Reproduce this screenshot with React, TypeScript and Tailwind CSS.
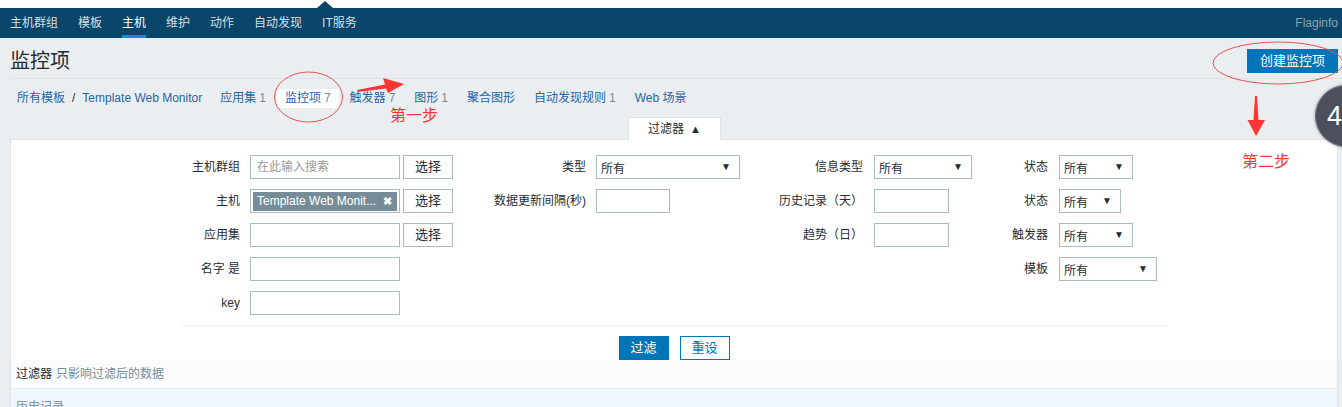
const font = "font-[family-name:'Liberation_Sans','Noto_Sans_CJK_SC',sans-serif]";

const navItems = ["主机群组", "模板", "主机", "维护", "动作", "自动发现", "IT服务"];

const tabs = [
  { label: "应用集", count: "1" },
  { label: "监控项", count: "7", active: true },
  { label: "触发器", count: "7" },
  { label: "图形", count: "1" },
  { label: "聚合图形", count: "" },
  { label: "自动发现规则", count: "1" },
  { label: "Web 场景", count: "" },
];

function Input({ w, placeholder }: { w: string; placeholder?: string }) {
  return (
    <div className={`${w} h-[24px] border border-[#acbbc2] bg-white flex items-center pl-[6px] text-[12px] text-[#999]`}>
      {placeholder}
    </div>
  );
}

function Select({ w }: { w: string }) {
  return (
    <div className={`${w} h-[24px] border border-[#acbbc2] bg-white flex items-center justify-between pl-[4px] pr-[8px] text-[12px] text-[#1f2c33]`}>
      <span className="pt-[3px]">所有</span>
      <span className="text-[10px] pb-[2px]">▼</span>
    </div>
  );
}

function PickBtn() {
  return (
    <div className="ml-[3px] w-[50px] h-[24px] border border-[#acbbc2] bg-white flex items-center justify-center text-[13px] text-[#1f2c33]">
      选择
    </div>
  );
}

function Label({ w, text }: { w: string; text: string }) {
  return <div className={`${w} shrink-0 text-right text-[12px] text-[#1f2c33]`}>{text}</div>;
}

export default function App() {
  return (
    <div className={`${font} relative w-[1342px] h-[407px] overflow-hidden bg-[#ebeef0]`}>
      {/* top strip */}
      <div className="h-[8px] bg-white relative">
        <svg className="absolute left-[317px] top-0" width="16" height="8" viewBox="0 0 16 8">
          <polygon points="0,8 8,1 16,8" fill="#0a466a" />
        </svg>
      </div>
      <div className="h-[30px] bg-[#0a466a] flex items-stretch justify-between">
        <div className="flex">
          {navItems.map((n) => (
            <div
              key={n}
              className={`relative px-[10px] flex items-center text-[12px] ${n === "主机" ? "text-white" : "text-[#d5dee3]"}`}
            >
              {n}
              {n === "主机" && <div className="absolute left-[10px] right-[10px] bottom-0 h-[3px] bg-[#1a8bd2]" />}
            </div>
          ))}
        </div>
        <div className="flex items-center pr-[4px] text-[12px] text-[#8ea3b1]">Flaginfo</div>
      </div>

      {/* header */}
      <div className="ml-[10px] h-[41px] pt-[6px] border-b border-[#dde3e7] flex items-center justify-between">
        <h1 className="text-[20px] leading-none text-[#1f2c33]">监控项</h1>
        <div className="mr-[4px] w-[91px] h-[24px] bg-[#0275b8] text-white text-[13px] flex items-center justify-center">
          创建监控项
        </div>
      </div>

      {/* breadcrumbs */}
      <div className="h-[38px] pl-[17px] flex items-center text-[12px] text-[#1f65a6]">
        <span>所有模板</span>
        <span className="mx-[7px] text-[#1f2c33]">/</span>
        <span>Template Web Monitor</span>
        <div className="ml-[8px] flex items-center">
          {tabs.map((t) =>
            t.active ? (
              <div key={t.label} className="pl-[2px] pr-[1px] flex items-center">
                <div className="px-[8px] h-[19px] bg-white flex items-center">
                  {t.label}
                  <span className="ml-[3px] text-[#768d99]">{t.count}</span>
                </div>
              </div>
            ) : (
              <div key={t.label} className="pl-[10px] pr-[9px] flex items-center">
                {t.label}
                {t.count && <span className="ml-[3px] text-[#768d99]">{t.count}</span>}
              </div>
            )
          )}
        </div>
      </div>

      {/* filter */}
      <div className="ml-[10px] mr-[4px]">
        <div className="relative z-10 -mb-px ml-[618px] w-[93px] h-[23px] bg-white border border-b-0 border-[#dde3e7] flex items-center justify-center text-[12px] text-[#1f2c33]">
          过滤器 <span className="ml-[6px] text-[11px]">▲</span>
        </div>
        <div className="bg-white border border-[#dde3e7]">
          <div className="pt-[10px]">
            {/* row 1 */}
            <div className="h-[34px] flex items-center">
              <Label w="w-[239px] pr-[10px]" text="主机群组" />
              <div className="w-[220px] flex items-center">
                <Input w="w-[150px]" placeholder="在此输入搜索" />
                <PickBtn />
              </div>
              <Label w="w-[126px] pr-[10px]" text="类型" />
              <div className="w-[154px]"><Select w="w-[144px]" /></div>
              <Label w="w-[124px] pr-[11px]" text="信息类型" />
              <div className="w-[116px]"><Select w="w-[98px]" /></div>
              <Label w="w-[69px] pr-[11px]" text="状态" />
              <Select w="w-[74px]" />
            </div>
            {/* row 2 */}
            <div className="h-[34px] flex items-center">
              <Label w="w-[239px] pr-[10px]" text="主机" />
              <div className="w-[220px] flex items-center">
                <div className="w-[150px] h-[24px] border border-[#acbbc2] bg-white flex items-center px-[2px]">
                  <div className="w-full h-[19px] bg-[#768d99] flex items-center justify-between pl-[4px] pr-[5px] text-[12px] text-white">
                    <span>Template Web Monit...</span>
                    <span className="text-[11px] font-bold">✖</span>
                  </div>
                </div>
                <PickBtn />
              </div>
              <Label w="w-[126px] pr-[10px]" text="数据更新间隔(秒)" />
              <div className="w-[154px]"><Input w="w-[74px]" /></div>
              <Label w="w-[124px] pr-[11px]" text="历史记录（天）" />
              <div className="w-[116px]"><Input w="w-[75px]" /></div>
              <Label w="w-[69px] pr-[11px]" text="状态" />
              <Select w="w-[62px]" />
            </div>
            {/* row 3 */}
            <div className="h-[34px] flex items-center">
              <Label w="w-[239px] pr-[10px]" text="应用集" />
              <div className="w-[220px] flex items-center">
                <Input w="w-[150px]" />
                <PickBtn />
              </div>
              <div className="w-[280px]" />
              <Label w="w-[124px] pr-[11px]" text="趋势（日）" />
              <div className="w-[116px]"><Input w="w-[75px]" /></div>
              <Label w="w-[69px] pr-[11px]" text="触发器" />
              <Select w="w-[74px]" />
            </div>
            {/* row 4 */}
            <div className="h-[34px] flex items-center">
              <Label w="w-[239px] pr-[10px]" text="名字 是" />
              <div className="w-[220px]"><Input w="w-[150px]" /></div>
              <div className="w-[520px]" />
              <Label w="w-[69px] pr-[11px]" text="模板" />
              <Select w="w-[98px]" />
            </div>
            {/* row 5 */}
            <div className="h-[34px] flex items-center">
              <Label w="w-[239px] pr-[10px]" text="key" />
              <Input w="w-[150px]" />
            </div>
          </div>
          <div className="mt-[5px] ml-[171px] w-[986px] border-t border-[#ebeef0]" />
          <div className="mt-[10px] flex justify-center gap-[11px]">
            <div className="w-[50px] h-[24px] bg-[#0275b8] text-white text-[13px] flex items-center justify-center">过滤</div>
            <div className="w-[50px] h-[24px] border border-[#0275b8] bg-white text-[#0275b8] text-[13px] flex items-center justify-center">重设</div>
          </div>
          <div className="h-[28px] bg-[#fbfcfd] flex items-center pl-[5px] text-[12px]">
            <span className="text-[#1f2c33]">过滤器</span>
            <span className="ml-[4px] text-[#768d99]">只影响过滤后的数据</span>
          </div>
          <div className="h-[30px] border-t border-[#e6ecf0] bg-[#f0f6fd] flex items-center pl-[5px] pt-[6px] text-[12px] text-[#768d99]">
            历史记录
          </div>
        </div>
      </div>

      {/* annotations */}
      <svg className="absolute inset-0 pointer-events-none" width="1342" height="407" viewBox="0 0 1342 407">
        <ellipse cx="308.5" cy="97" rx="34" ry="25" fill="none" stroke="#e35454" strokeWidth="1" />
        <ellipse cx="1278" cy="63" rx="65" ry="21" fill="none" stroke="#e35454" strokeWidth="1" />
        <polygon points="357,90 385,84.5 383,78 404,84 388,93 386,88.5 358,92" fill="#ff3434" />
        <polygon points="1255,96 1257,96 1258.5,120 1265,120 1256,136 1247.5,120 1253.5,120" fill="#ff3434" />
      </svg>
      <div className="absolute left-[390px] top-[108px] text-[16px] leading-none text-[#ff3434]">第一步</div>
      <div className="absolute left-[1242px] top-[154px] text-[16px] leading-none text-[#ff3434]">第二步</div>
      <div className="absolute left-[1315px] top-[85px] w-[62px] h-[62px] rounded-full bg-[#4c505d] border border-[#6b7080] shadow-[0_0_3px_rgba(0,0,0,0.4)] flex items-center pl-[11px] text-[27px] font-light text-white">
        4
      </div>
    </div>
  );
}
